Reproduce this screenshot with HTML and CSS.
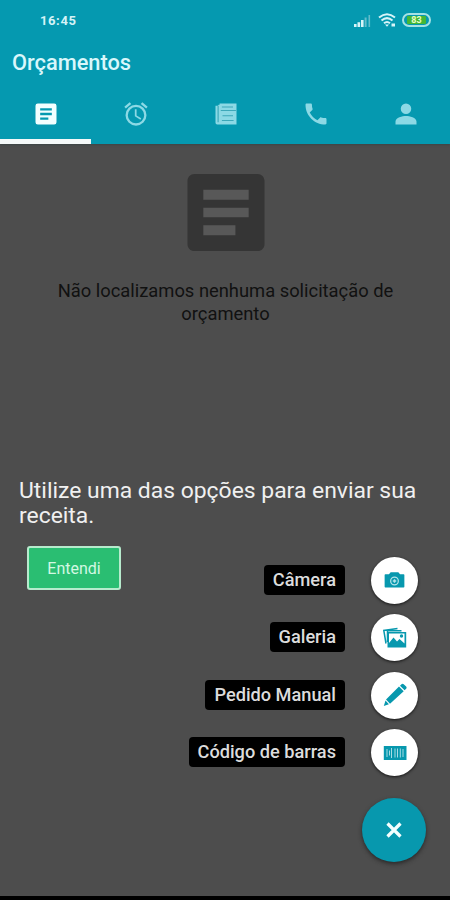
FILE: index.html
```html
<!DOCTYPE html>
<html lang="pt-BR">
<head>
<meta charset="utf-8">
<title>Orçamentos</title>
<link rel="stylesheet" href="styles.css">
</head>
<body>
<header class="header">
  <div class="status">
    <span class="clock">16:45</span>
    <div class="indicators">
      <svg class="signal" viewBox="0 0 17 13"><path d="M0 10h2.6v3H0zM3.5 8.3h2.6V13H3.500zM7 6h2.600v7H7z" fill="#d8f4f8"/><path d="M10.600 3.500h2V13h-2zM14.500 1h1.600v12h-1.600z" fill="#62bccb"/></svg>
      <svg class="wifi" viewBox="0 0 18 14"><g fill="none" stroke="#d8f4f8" stroke-width="2"><path d="M1 4.500Q9-2 17 4.500M3.500 7.500Q9 2.800 14.500 7.500M6 10.200Q9 7.700 12 10.200"/></g><path d="M7 11.500h4L9 13.800zM13.500 10.500h3.500v3h-3.500z" fill="#d8f4f8"/></svg>
      <span class="battery"><span class="charge">83</span></span>
    </div>
  </div>
  <h1 class="title">Orçamentos</h1>
  <nav class="tabs">
    <a class="tab active"><svg viewBox="0 0 24 24"><path d="M19 3H5a2 2 0 0 0-2 2v14a2 2 0 0 0 2 2h14a2 2 0 0 0 2-2V5a2 2 0 0 0-2-2zm-5 14H7v-2h7v2zm3-4H7v-2h10v2zm0-4H7V7h10v2z"/></svg></a>
    <a class="tab"><svg viewBox="0 0 24 24"><path d="M22 5.720l-4.600-3.860-1.290 1.530 4.600 3.860L22 5.720zM7.880 3.390L6.600 1.860 2 5.710l1.290 1.530 4.590-3.850zM12.500 8H11v6l4.750 2.850.75-1.230-4-2.370V8zM12 4a9 9 0 1 0 0 18 9 9 0 0 0 0-18zm0 16a7 7 0 1 1 0-14 7 7 0 0 1 0 14z"/></svg></a>
    <a class="tab"><svg viewBox="0 0 24 24"><path d="M6.500 3H21v18H4.500A1.500 1.500 0 0 1 3 19.500V5h2v14h1.500z"/><path d="M5 5v15.500h3V4H5.700z"/><path d="M5.300 5v14M8.500 6h9.500M7.500 9h13M9 13.500h9M8.500 17.500h10" fill="none" stroke="#3da8b9" stroke-width=".9"/></svg></a>
    <a class="tab"><svg viewBox="0 0 24 24"><path d="M6.620 10.790c1.440 2.830 3.760 5.140 6.590 6.590l2.200-2.200c.27-.27.67-.36 1.020-.24 1.120.37 2.330.57 3.570.57.550 0 1 .45 1 1V20c0 .55-.45 1-1 1-9.390 0-17-7.610-17-17 0-.55.45-1 1-1h3.500c.55 0 1 .45 1 1 0 1.250.2 2.450.57 3.570.11.350.03.740-.25 1.020l-2.200 2.200z"/></svg></a>
    <a class="tab"><svg class="person" viewBox="0 0 24 24"><path d="M12 12a4.500 4.500 0 1 0 0-9 4.500 4.500 0 0 0 0 9zm0 1.800c-3 0-9 1.500-9 4.700V21h18v-2.500c0-3.200-6-4.700-9-4.700z"/></svg></a>
  </nav>
</header>
<main class="content">
  <section class="empty">
    <svg class="empty-icon" viewBox="3 3 18 18"><path d="M6 6h12v12H6z" fill="#585858"/><path d="M19.400 3H4.600C3.700 3 3 3.700 3 4.600v14.800c0 .9.7 1.600 1.600 1.600h14.800c.9 0 1.600-.7 1.600-1.600V4.600c0-.9-.7-1.600-1.600-1.600zM14.200 17.300H6.700V15h7.500v2.300zm3.100-4.200H6.700v-2.200h10.600v2.200zm0-4.100H6.700V6.700h10.600V9z" fill="#353535"/></svg>
    <p class="empty-text">Não localizamos nenhuma solicitação de<br>orçamento</p>
  </section>
  <p class="hint">Utilize uma das opções para enviar sua<br>receita.</p>
  <section class="actions">
    <button class="ok">Entendi</button>
    <div class="dial">
      <div class="row"><span class="label">Câmera</span><span class="mini"><svg class="camera" viewBox="0 0 24 24"><path d="M2.500 5.500h3.700L8 3.500h8l1.800 2h3.700q.8 0 .8.800v12.200q0 .8-.8.800h-19q-.8 0-.8-.8V6.300q0-.8.800-.8z"/><circle cx="12" cy="12.500" r="4" fill="none" stroke="#b5e4ea" stroke-width="1.300"/><path d="M12 10.700v3.600M10.200 12.500h3.600" stroke="#b5e4ea" stroke-width="1.500"/></svg></span></div>
      <div class="row"><span class="label">Galeria</span><span class="mini"><svg viewBox="0 0 24 24"><path d="M3 17.500L.8 4.500 14.500 2.500M4.500 16V4.800h14" fill="none" stroke="#0798ae" stroke-width="1.500"/><path d="M4.500 6h18.700v15.500H4.500zm1.500 1.500v9.500l4.500-5.500 3.500 4 2.500-2.500 5 4.500V7.500z" fill-rule="evenodd"/><circle cx="18.500" cy="10" r="1.700"/></svg></span></div>
      <div class="row"><span class="label">Pedido Manual</span><span class="mini"><svg viewBox="0 0 24 24"><path d="M.8 23L2.500 17.500 5.900 21.200zM3 16.600L16 3.600l4.700 4.700L7 20.700zM17 2.700l1.500-1.500q1-1 2.200 0l2.400 2.400q1 1 0 2.200l-1.500 1.500z"/></svg></span></div>
      <div class="row"><span class="label">Código de barras</span><span class="mini"><svg viewBox="0 0 24 24"><path d="M.8 5h22.700v14H.8z"/><path d="M4 8v8M6.500 9.500v5M8.500 7v10M12 7.500v9M14.500 7.500v9M17.300 7.500v9M20 8v8" fill="none" stroke="#a6dce4" stroke-width="1"/></svg></span></div>
      <button class="fab"><svg viewBox="0 0 18 18"><path d="M2.500 2.500l13 13M15.500 2.500l-13 13" fill="none" stroke="#f4ffff" stroke-width="3.200"/></svg></button>
    </div>
  </section>
</main>
<footer class="navbar"></footer>
</body>
</html>
```
FILE: styles.css
```css
* { box-sizing: border-box; margin: 0; padding: 0; }
body { width: 450px; height: 900px; display: flex; flex-direction: column; overflow: hidden; background: #4d4d4d; font-family: Roboto, sans-serif; }
svg { display: block; }
button { font-family: inherit; }
.header { height: 144px; background: #0599b0; display: flex; flex-direction: column; flex: none; box-shadow: 0 1px 2px #3d4546; }
.status { height: 40px; display: flex; justify-content: space-between; padding: 0 19px 0 40px; align-items: center; }
.clock { font-size: 13px; font-weight: 700; color: #d5f3f7; letter-spacing: .6px; line-height: 20px; padding-top: 1px; }
.indicators { display: flex; align-items: center; }
.signal { width: 17px; height: 13px; margin-right: 7px; }
.wifi { width: 18px; height: 14px; margin-right: 6px; }
.battery { width: 29px; height: 14px; border: 2px solid #a5e2e4; border-radius: 7px; padding: 1px 3px; display: flex; }
.charge { flex: 1; background: #45b735; color: #e5ffc8; font-size: 9px; line-height: 8px; font-weight: 700; text-align: center; border-radius: 1px; }
.title { height: 44px; padding-left: 12px; font-size: 21.8px; line-height: 45px; font-weight: 500; color: #d9f7fb; }
.tabs { flex: 1; display: grid; grid-template-columns: repeat(5, 1fr); }
.tab { display: flex; justify-content: center; padding: 16px 0 0 1px; border-bottom: 5px solid transparent; fill: #8cd9e5; }
.tab svg { width: 28px; height: 28px; }
.tab.active { fill: #f2ffff; border-color: #f5f9f9; margin-right: -1px; }
.content { flex: 1; display: flex; flex-direction: column; padding-top: 30px; }
.empty { height: 303px; padding-left: 1px; display: flex; flex-direction: column; align-items: center; }
.empty-icon { width: 78px; height: 77px; }
.empty-text { margin-top: 28px; text-align: center; color: #111; font-size: 18.35px; line-height: 23px; white-space: nowrap; }
.hint { height: 69px; padding: 1px 0 0 19px; font-size: 22.9px; line-height: 25px; color: #f0f0f0; white-space: nowrap; }
.actions { display: flex; justify-content: space-between; align-items: flex-start; padding: 0 24px 0 27px; }
.ok { width: 94px; height: 44px; background: #2abe72; border: 2px solid #b7ebcd; border-radius: 3px; color: #d3f8e2; font-size: 16px; }
.dial { display: flex; flex-direction: column; align-items: flex-end; padding-top: 11px; }
.row { height: 57.400px; display: flex; align-items: flex-start; padding-right: 8px; }
.label { height: 30px; margin: 8px 26px 0 0; padding: 0 9px; border-radius: 4px; background: #000; color: #dcdcdc; font-size: 18.2px; line-height: 29px; font-weight: 500; white-space: nowrap; }
.mini { width: 47px; height: 47px; border-radius: 50%; background: #fff; display: flex; align-items: center; justify-content: center; fill: #0798ae; box-shadow: 0 1px 3px #161616; }
.mini svg { width: 24px; height: 24px; }
.mini .camera { width: 23px; height: 23px; }
.fab { width: 64px; height: 64px; margin-top: 11px; border: 0; border-radius: 50%; background: #0798ae; display: flex; align-items: center; justify-content: center; box-shadow: 0 2px 4px #292929; }
.fab svg { width: 18px; height: 18px; }
.navbar { height: 4px; background: #000; flex: none; }
```
